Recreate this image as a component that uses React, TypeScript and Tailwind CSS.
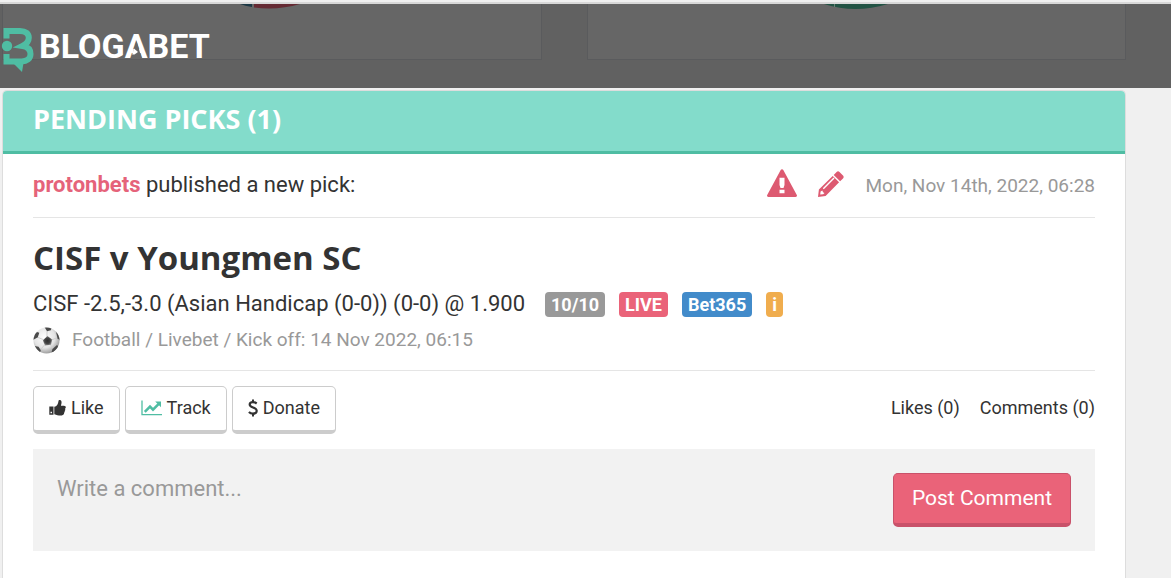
import type { ReactNode } from "react";

const badges = [
    { label: "10/10", className: "ml-5 bg-[#999999]" },
    { label: "LIVE", className: "ml-3.5 bg-[#ea6379]" },
    { label: "Bet365", className: "ml-3.5 bg-[#428bca]" },
    { label: "i", className: "ml-3.5 bg-[#f0ad4e]" },
];

function Logo() {
    return (
        <svg width="210" height="50" viewBox="0 0 210 50" role="img" aria-label="Blogabet">
            <path
                d="M6.500 14.500V7H20c6 0 8.800 2.800 8.800 6.800 0 3.600-2.300 6.200-6.300 8.200 5.300.8 8 3.800 8 8 0 4.800-3.500 7.400-9 7.400h-15V30"
                fill="none"
                stroke="#4fbda3"
                strokeWidth="6"
            />
            <path d="M13 39h10.500L22 48z" fill="#4fbda3" />
            <circle cx="7" cy="22" r="5.200" fill="#4fbda3" />
            <text x="39" y="34" fill="#fff" fontSize="34" fontWeight="700" fontFamily="Roboto, sans-serif">
                BLOGABET
            </text>
            {/* open the A and leave only a short tick of its bar */}
            <path d="m136.500 17 5.300 17.500h-10.600z" fill="#666666" />
            <path d="m134 24.500 4 3.500-3.500 2.500h-2.300z" fill="#fff" />
        </svg>
    );
}

function WarningIcon() {
    return (
        <svg width="30" height="28" viewBox="0 0 30 28" fill="#dd5a71" aria-hidden="true">
            <path
                fillRule="evenodd"
                d="M13.700.9a1.500 1.500 0 0 1 2.600 0l13.500 25.200c.5 1-.1 1.900-1.200 1.900H1.400c-1.100 0-1.700-.9-1.200-1.900zM12.500 8.800v7.200l1 3h3l1-3V8.800zM12.500 20.700v3.500h5v-3.500z"
            />
        </svg>
    );
}

function PencilIcon() {
    return (
        <svg width="26" height="26" viewBox="0 0 26 26" fill="#dd5a71" aria-hidden="true">
            <path d="M18.600 1c.9-.9 2-.9 2.900 0L25 4.500c.9.900.9 2 0 2.900l-2.900 2.900-6.400-6.400z" />
            <path
                fillRule="evenodd"
                d="m14.700 4.900 6.400 6.400L7.600 24.900 0 26l.9-7.400zM4.800 17.300l1 1L16.500 7.600l-1-1zM2.600 20.600l-.4 3 3-.4 1.300-1.100-1.500-.8-.6-1.700z"
            />
        </svg>
    );
}

function ThumbIcon() {
    return (
        <svg width="17" height="16" viewBox="0 0 17 16" fill="#333" aria-hidden="true">
            <path fillRule="evenodd" d="M.3 6.500h4.200v8.300H.3zM1.500 11.700v1.600H3v-1.600z" />
            <path d="M5.300 6.800 7 6.200c1.500-1 2-2.500 2.400-4.700C9.600.4 10 0 10.800.1c1.500.2 2 1.600 1.700 3.200l-.6 2.400h3c1.300 0 2 .8 1.900 1.800-.1.600-.4 1-.8 1.200.5.800.3 1.700-.3 2.200.2.800 0 1.500-.6 1.900.1 1.500-.7 2.500-2.400 2.600-3 .2-4.700-.4-7.400-1.200z" />
        </svg>
    );
}

function ChartIcon() {
    return (
        <svg width="21" height="16" viewBox="0 0 21 16" fill="none" stroke="#4fbda3" aria-hidden="true">
            <path d="M1 .5v14.200h20" strokeWidth="1.300" />
            <path d="M3.800 11.800 9 6.600l3 3L18 3.600" strokeWidth="2.600" />
            <path d="M14.200 1.400H20v5.800z" fill="#4fbda3" stroke="none" />
        </svg>
    );
}

function DollarIcon() {
    return (
        <svg width="10" height="18" viewBox="0 0 10 18" fill="none" stroke="#333" strokeWidth="2.200" aria-hidden="true">
            <path d="M8.700 4.500C7.500 3.600 6.300 3.100 4.900 3.100 3 3.100 1.700 4.100 1.700 5.600c0 3.500 7 2.300 7 6.200 0 1.800-1.600 2.900-3.700 2.900-1.600 0-3-.6-4.100-1.700" />
            <path d="M5 .4v3M5 14.300v3.300" strokeWidth="2" />
        </svg>
    );
}

function FootballIcon() {
    return (
        <svg width="27" height="27" viewBox="0 0 27 27" aria-hidden="true">
            <defs>
                <radialGradient id="ball" cx=".42" cy=".38" r=".62">
                    <stop offset="0" stopColor="#fff" />
                    <stop offset=".65" stopColor="#e4e4e4" />
                    <stop offset="1" stopColor="#a0a0a0" />
                </radialGradient>
                <radialGradient id="patch">
                    <stop offset="0" stopColor="#2e2e2e" />
                    <stop offset=".6" stopColor="#444" />
                    <stop offset="1" stopColor="#8a8a8a" />
                </radialGradient>
                <clipPath id="ball-edge">
                    <circle cx="13.500" cy="13.500" r="13" />
                </clipPath>
            </defs>
            <circle cx="13.500" cy="13.500" r="13" fill="url(#ball)" />
            <g clipPath="url(#ball-edge)">
                <path d="M14 10V4M18.500 13l5-2M17.500 18l3.500 4M11.500 18 8 22M10 12.500 4 10" stroke="#cfcfcf" fill="none" />
                <path d="m14.500 9 4.700 3.500-1.200 5.300-6 .7-2.200-5.200z" fill="url(#patch)" />
                <g fill="#4a4a4a">
                    <path d="M11.500 0h7.300l-1 3.300-3.800.9z" />
                    <path d="m0 8 4-3 2.300.8-1.500 4.500L0 13z" />
                    <path d="m23 5 4.500 3.500V14l-3-2.800z" />
                    <path d="m1.500 19 4 .8 2.300 3.400-1 2.800z" />
                    <path d="m19.500 22 4.500-4 2 2-5 6-2.500-.5z" />
                </g>
            </g>
        </svg>
    );
}

function ActionButton({ icon, children }: { icon: ReactNode; children: ReactNode }) {
    return (
        <button
            type="button"
            className="flex h-12 items-center gap-[5px] rounded-[5px] border border-b-4 border-[#cccccc] bg-white px-[15px] pb-0.5 text-lg leading-6 text-[#333333]"
        >
            {icon}
            {children}
        </button>
    );
}

export default function App() {
    return (
        <div className="flex min-h-screen flex-col bg-[#f0f0f0] font-[Roboto,sans-serif] text-[#333333]">
            <header className="relative h-[88px] border-t-2 border-[#f0f0f0] bg-[#616161]">
                <div className="h-0.5 bg-[#d8d8d8]" />
                {/* bottoms of the stats panels showing through the bar */}
                <div className="mr-[45px] ml-0.5 grid h-14 grid-cols-2 gap-[45px]">
                    <div className="flex justify-center border border-t-0 border-[#5a5b5d] bg-[#666666]">
                        <svg width="66" height="6" viewBox="0 0 66 6" aria-hidden="true">
                            <path d="M1 0q5 2 12 3V0z" fill="#1c3845" />
                            <path d="M15 0v3.500q24 3 46-3.500z" fill="#652a33" />
                        </svg>
                    </div>
                    <div className="flex justify-center border border-t-0 border-[#5a5b5d] bg-[#666666]">
                        <svg width="66" height="6" viewBox="0 0 66 6" aria-hidden="true">
                            <path d="M1 0q31 10 64 0z" fill="#225344" />
                            <path d="M11.500 0v3" stroke="#668075" />
                        </svg>
                    </div>
                </div>
                <a href="#" className="absolute top-[22px] left-0">
                    <Logo />
                </a>
            </header>

            <main className="mt-0.5 mr-[45px] ml-0.5 flex-1 rounded-t-[5px] border border-b-0 border-[#dddddd] bg-white">
                <h2 className="flex h-[63px] items-center rounded-t-[4px] border-b-[3px] border-[#4fbda3] bg-[#83dccb] px-[30px] pb-1 font-['Open_Sans',sans-serif] text-[27px] leading-9 font-bold text-white">
                    PENDING PICKS (1)
                </h2>

                <article className="px-[30px]">
                    <div className="flex h-16 items-center justify-between border-b border-[#e5e5e5]">
                        <p className="pb-0.5 text-[22px] leading-7">
                            <a href="#" className="font-bold text-[#e5637a]">
                                protonbets
                            </a>{" "}
                            published a new pick:
                        </p>
                        <div className="flex items-center gap-[21px]">
                            <button type="button" aria-label="Report pick" className="pb-1.5">
                                <WarningIcon />
                            </button>
                            <button type="button" aria-label="Edit pick" className="pb-1">
                                <PencilIcon />
                            </button>
                            <time className="text-[19px] leading-7 text-[#999999]">Mon, Nov 14th, 2022, 06:28</time>
                        </div>
                    </div>

                    <div className="border-b border-[#e5e5e5] pt-[18px] pb-4">
                        <h3 className="font-['Open_Sans',sans-serif] text-[33px] leading-[44px] font-bold">
                            CISF v Youngmen SC
                        </h3>
                        <div className="mt-1.5 flex h-9 items-center">
                            <span className="text-[22px] leading-7">
                                CISF -2.5,-3.0 (Asian Handicap (0-0)) (0-0) @ 1.900
                            </span>
                            {badges.map((badge) => (
                                <span
                                    key={badge.label}
                                    className={`rounded-[4px] px-1.5 text-lg leading-[25px] font-bold text-white ${badge.className}`}
                                >
                                    {badge.label}
                                </span>
                            ))}
                        </div>
                        <div className="mt-1 flex items-center gap-3 text-[19px] leading-7 text-[#999999]">
                            <FootballIcon />
                            Football / Livebet / Kick off: 14 Nov 2022, 06:15
                        </div>
                    </div>

                    <div className="mt-[15px] flex items-center justify-between">
                        <div className="flex gap-[5px]">
                            <ActionButton icon={<ThumbIcon />}>Like</ActionButton>
                            <ActionButton icon={<ChartIcon />}>Track</ActionButton>
                            <ActionButton icon={<DollarIcon />}>Donate</ActionButton>
                        </div>
                        <div className="flex gap-5 pb-1 text-lg leading-6">
                            <a href="#">Likes (0)</a>
                            <a href="#">Comments (0)</a>
                        </div>
                    </div>

                    <form className="mt-[15px] flex h-[102px] items-start justify-between bg-[#f2f2f2] p-6">
                        <textarea
                            aria-label="Write a comment"
                            placeholder="Write a comment..."
                            className="h-[54px] flex-1 resize-none bg-transparent text-[22px] leading-8 outline-none placeholder:text-[#999999]"
                        />
                        <button
                            type="button"
                            className="h-[54px] rounded-[5px] border border-b-4 border-[#c9526a] bg-[#ea6379] px-[18px] pb-0.5 text-[21px] leading-7 text-white"
                        >
                            Post Comment
                        </button>
                    </form>
                </article>
            </main>
        </div>
    );
}
